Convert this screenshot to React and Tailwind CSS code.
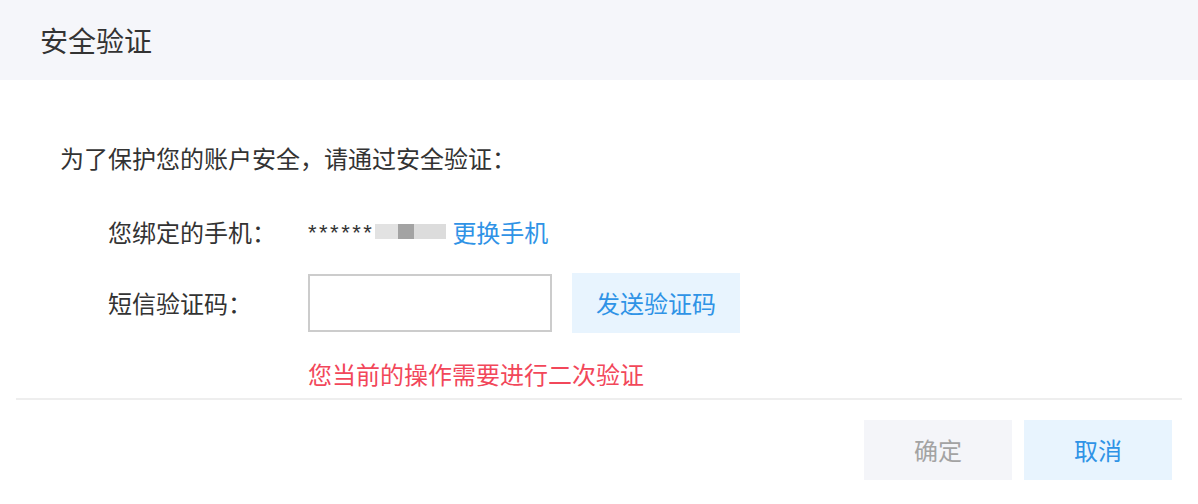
export default function App() {
  return (
    <div
      className="w-[1198px] h-[504px] bg-white text-[#333] overflow-hidden"
      style={{ fontFamily: '"Noto Sans CJK SC", "Noto Sans", sans-serif' }}
    >
      {/* Header */}
      <div className="h-[80px] bg-[#f5f6fa] flex items-center px-[40px]">
        <h1 className="text-[28px] leading-none">安全验证</h1>
      </div>

      {/* Body */}
      <div className="pt-[62px]">
        <p className="pl-[60px] h-[32px] flex items-center text-[24px]">
          为了保护您的账户安全，请通过安全验证：
        </p>

        <div className="mt-[42px] h-[32px] flex items-center text-[24px]">
          <span className="w-[308px] pl-[108px]">您绑定的手机：</span>
          <span className="flex items-center">
            <span className="text-[22px] tracking-[2.5px] font-['Liberation_Sans']">******</span>
            <span className="flex h-[15px] ml-[1px] mt-[-2px]">
              <span className="w-[23px] bg-[#e2e2e2]"></span>
              <span className="w-[16px] bg-[#a3a3a3]"></span>
              <span className="w-[32px] bg-[#dcdcdc]"></span>
            </span>
            <a className="ml-[6px] text-[#2f93e6]">更换手机</a>
          </span>
        </div>

        <div className="mt-[25px] h-[60px] flex items-center text-[24px]">
          <span className="w-[308px] pl-[108px]">短信验证码：</span>
          <input className="w-[244px] h-[58px] border-2 border-[#cccccc] outline-none px-3" />
          <button className="ml-[20px] w-[168px] h-[60px] bg-[#e8f4fe] text-[#2f93e6] text-[24px]">
            发送验证码
          </button>
        </div>

        <p className="mt-[25px] pl-[308px] h-[32px] flex items-center text-[24px] text-[#f2475a]">
          您当前的操作需要进行二次验证
        </p>

        <div className="mt-[8px] mx-[16px] h-[2px] bg-[#eeeeee]"></div>

        <div className="mt-[20px] pr-[26px] flex justify-end gap-[12px]">
          <button className="w-[148px] h-[60px] bg-[#f4f5f9] text-[#a3a3a3] text-[24px]">确定</button>
          <button className="w-[148px] h-[60px] bg-[#e8f4fe] text-[#2f93e6] text-[24px]">取消</button>
        </div>
      </div>
    </div>
  );
}
